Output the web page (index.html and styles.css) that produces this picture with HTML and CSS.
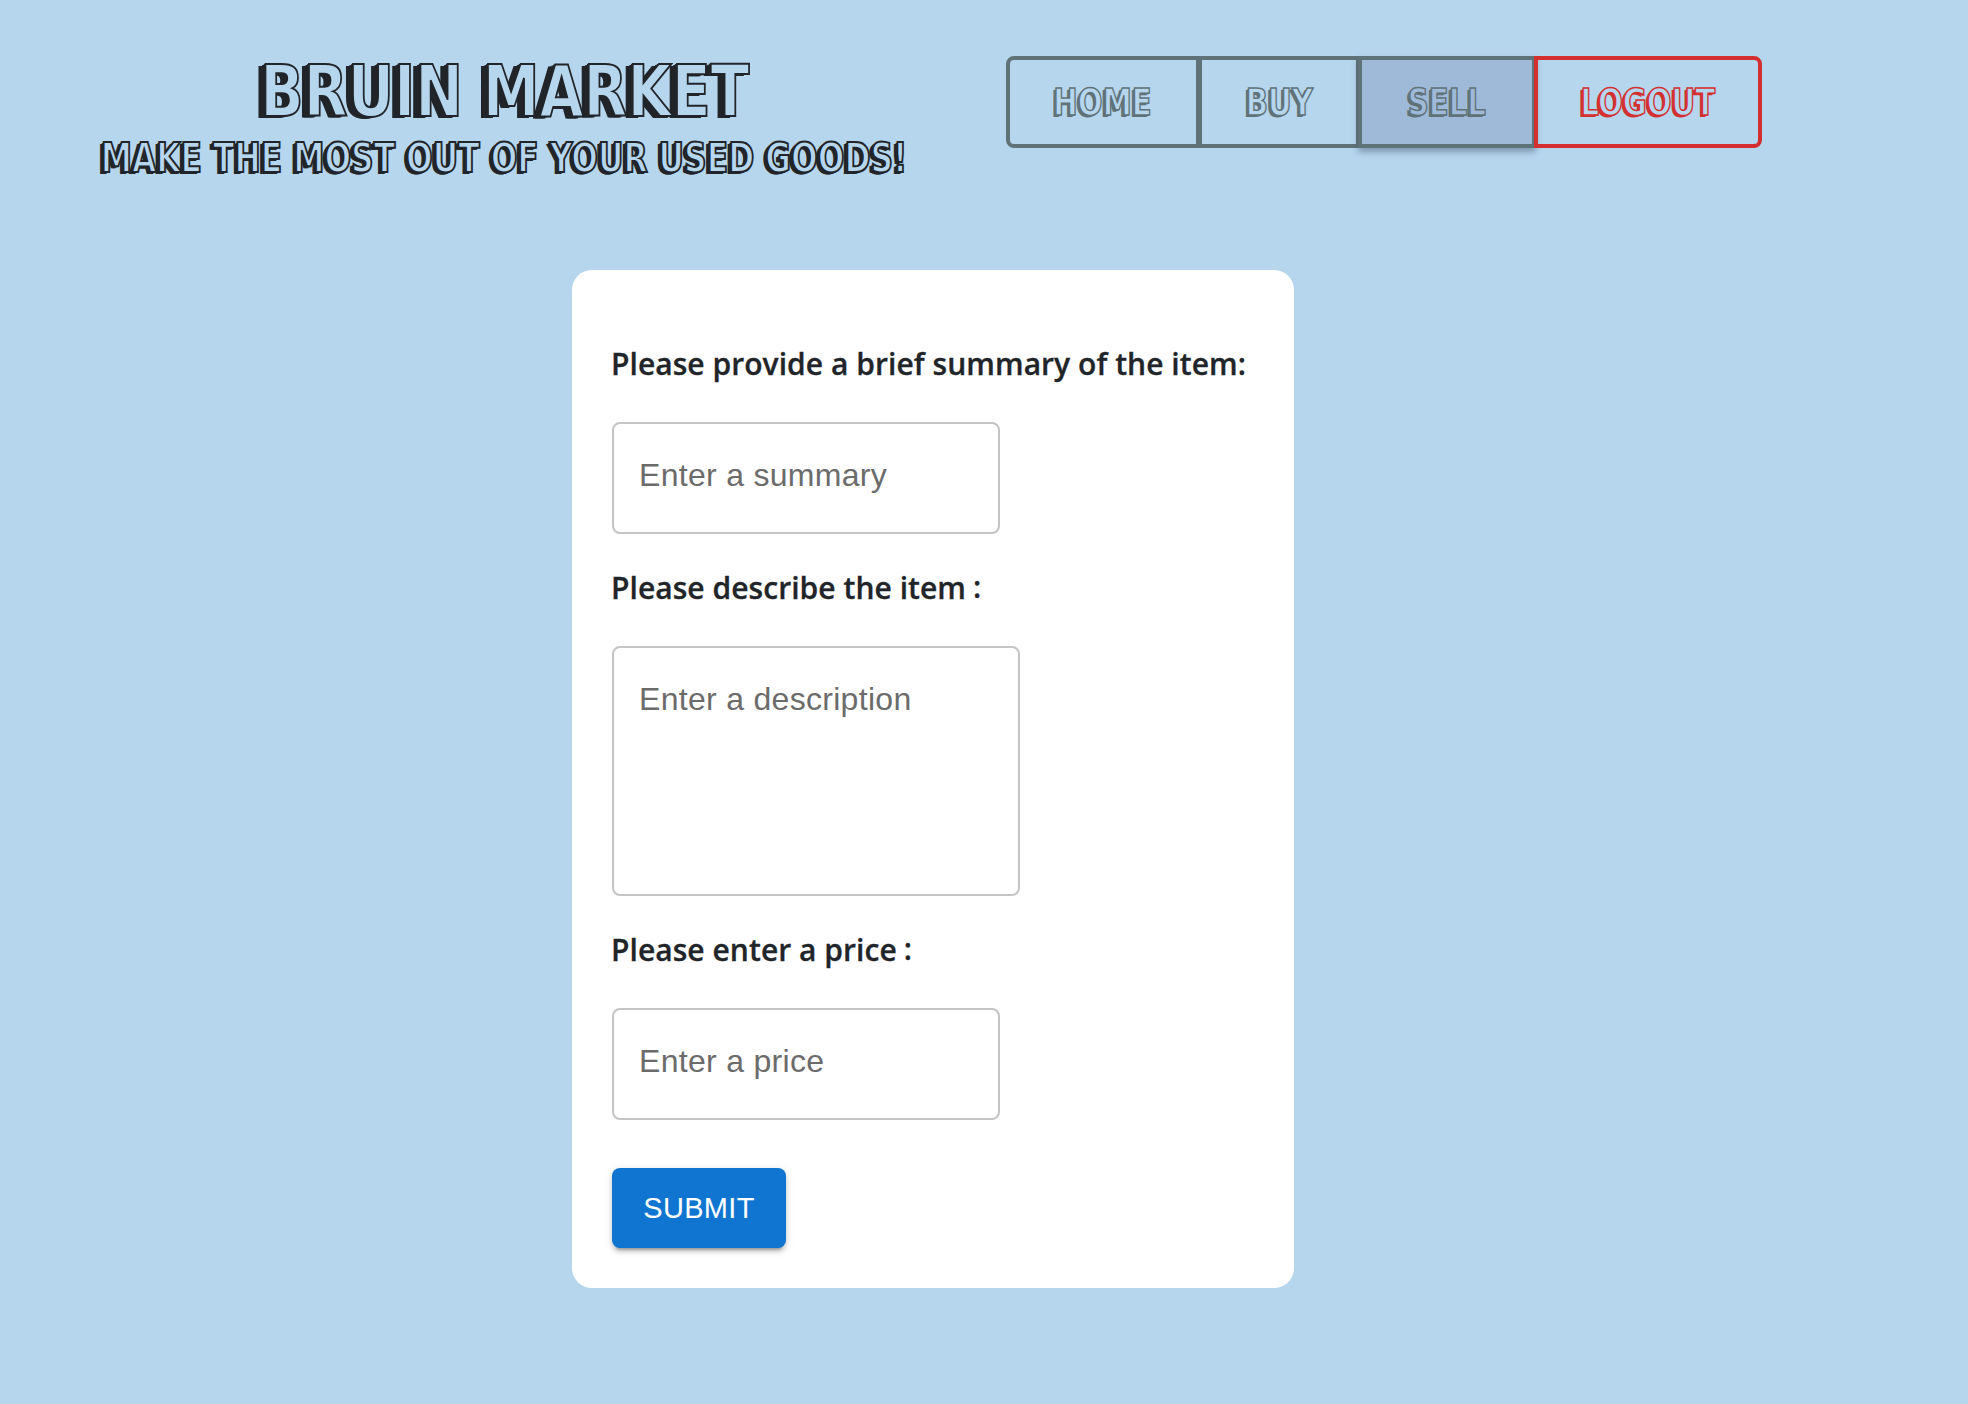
FILE: index.html
```html
<!DOCTYPE html>
<html lang="en">
<head>
<meta charset="utf-8">
<title>Bruin Market</title>
<link rel="stylesheet" href="styles.css">
</head>
<body>
<header class="top">
  <div class="brand">
    <h1 class="brand-title">BRUIN MARKET</h1>
    <p class="brand-tag">MAKE THE MOST OUT OF YOUR USED GOODS!</p>
  </div>
  <nav class="nav">
    <a class="nav-btn nav-home"><span class="nav-label">HOME</span></a>
    <a class="nav-btn nav-buy"><span class="nav-label">BUY</span></a>
    <a class="nav-btn nav-sell"><span class="nav-label">SELL</span></a>
    <a class="nav-btn nav-logout"><span class="nav-label">LOGOUT</span></a>
  </nav>
</header>
<main class="main">
  <form class="card">
    <label class="label">Please provide a brief summary of the item:</label>
    <input class="field field-short" placeholder="Enter a summary">
    <label class="label">Please describe the item<span class="colon">:</span></label>
    <textarea class="field field-area" placeholder="Enter a description"></textarea>
    <label class="label">Please enter a price<span class="colon">:</span></label>
    <input class="field field-short" placeholder="Enter a price">
    <button class="submit" type="button">SUBMIT</button>
  </form>
</main>
</body>
</html>
```
FILE: styles.css
```css
* { box-sizing: border-box; }
html, body { margin: 0; padding: 0; }
body { background: #b6d6ee; height: 1404px; overflow: hidden; font-family: "Open Sans", sans-serif; color: #212529; }

.top { display: flex; align-items: flex-start; padding: 56px 0 0 102px; height: 270px; }
.brand { width: 805px; display: flex; flex-direction: column; align-items: center; }
.brand-title, .brand-tag {
  margin: 0;
  font-family: "DejaVu Sans", sans-serif;
  font-stretch: condensed;
  font-weight: 700;
  color: #b6d6ee;
  white-space: nowrap;
  -webkit-text-stroke: 2px #212529;
}
.brand-title { font-size: 72px; line-height: 70px; transform: scaleX(.88); text-shadow: -2px 0 0 #212529, -4px 1px 0 #212529, -6px 2px 0 #212529, -8px 2px 0 #212529; }
.brand-tag { font-size: 40px; line-height: 44px; margin-top: 10px; transform: scaleX(.873); text-shadow: -1px 1px 0 #212529, -2px 1px 0 #212529, -3px 2px 0 #212529, -4px 2px 0 #212529; }

.nav { display: flex; margin-left: 99px; height: 92px; }
.nav-btn {
  display: flex; align-items: center; justify-content: center;
  height: 92px;
  border: 4px solid #5f7278;
  font-family: "DejaVu Sans", sans-serif;
  font-stretch: condensed;
  font-weight: 700; font-size: 38px;
  color: #b6d6ee;
  -webkit-text-stroke: 1.5px #5f7278;
  text-shadow: -1px 1px 0 #5f7278, -3px 2px 0 #5f7278;
}
.nav-label { display: inline-block; transform: scaleX(.855); }
.nav-home { width: 194px; border-radius: 8px 0 0 8px; }
.nav-buy { width: 162px; margin-left: -2px; }
.nav-sell { width: 178px; margin-left: -2px; background: #9fbad8; color: #9fbad8; box-shadow: 0 4px 6px rgba(60, 80, 100, .45); }
.nav-logout { width: 228px; margin-left: -2px; border-color: #d32f2f; border-radius: 0 8px 8px 0; -webkit-text-stroke-color: #d32f2f; text-shadow: -1px 1px 0 #d32f2f, -3px 2px 0 #d32f2f; }

.main { padding-left: 572px; }
.card { width: 722px; height: 1018px; background: #fff; border-radius: 20px; padding: 70px 40px 0; display: flex; flex-direction: column; align-items: flex-start; }
.label { font-family: "Open Sans", sans-serif; font-weight: 600; font-size: 30px; line-height: 48px; letter-spacing: .05px; -webkit-text-stroke: .3px #212529; margin: 0 0 34px -1px; white-space: nowrap; }
.colon { margin-left: 7px; line-height: 0; vertical-align: 1px; }
.field { display: block; border: 2px solid #c4c4c4; border-radius: 8px; background: #fff; font-family: "Liberation Sans", sans-serif; font-size: 32px; line-height: 37px; letter-spacing: .3px; color: #333; outline: none; resize: none; margin-bottom: 30px; }
.field::placeholder { color: #6b6b6b; opacity: 1; }
.field-short { width: 388px; height: 112px; padding: 30px 25px 36px; }
.field-area { width: 408px; height: 250px; padding: 33px 25px; }
.submit { margin-top: 18px; width: 174px; height: 80px; border: 0; border-radius: 8px; background: #0f75d0; color: #fff; font-family: "Liberation Sans", sans-serif; font-size: 29px; letter-spacing: .3px; box-shadow: 0 6px 2px -4px rgba(0,0,0,.2), 0 4px 4px rgba(0,0,0,.14), 0 2px 10px rgba(0,0,0,.12); }
```
